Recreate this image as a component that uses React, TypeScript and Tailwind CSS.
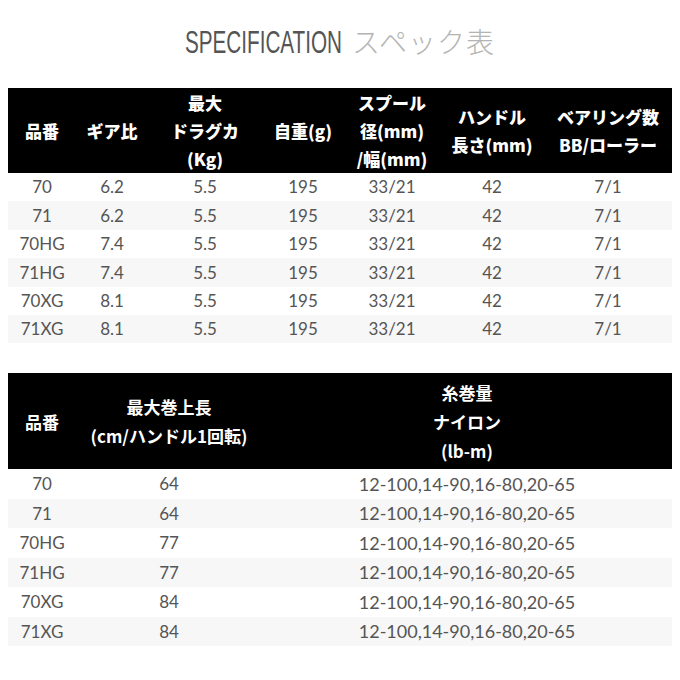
export default function App() {
  const rows1 = [
    ["70", "6.2"],
    ["71", "6.2"],
    ["70HG", "7.4"],
    ["71HG", "7.4"],
    ["70XG", "8.1"],
    ["71XG", "8.1"],
  ];
  const rows2 = [
    ["70", "64"],
    ["71", "64"],
    ["70HG", "77"],
    ["71HG", "77"],
    ["70XG", "84"],
    ["71XG", "84"],
  ];
  const cols1 = "grid grid-cols-[68px_72px_114px_82px_96px_104px_128px]";
  const cols2 = "grid grid-cols-[68px_186px_410px]";
  const jp = "font-['Noto_Sans_CJK_JP',sans-serif]";
  const num = "font-['Lato','Noto_Sans_CJK_JP',sans-serif]";

  return (
    <div className="w-[680px] h-[680px] bg-white">
      <div className="flex justify-center items-baseline pt-[26px] h-[88px]">
        <span className="w-[157px] leading-none text-[32px] text-[#555] whitespace-nowrap font-['Liberation_Sans_Narrow','Liberation_Sans',sans-serif]">
          <span className="inline-block origin-left scale-x-[0.646]">SPECIFICATION</span>
        </span>
        <span className={`ml-[10px] text-[28px] leading-none font-light text-[#b4b4b4] tracking-[1px] ${jp}`}>
          スペック表
        </span>
      </div>

      <div className="mx-[8px]">
        <div className={`${cols1} bg-black text-white font-black text-[17px] leading-[28px] h-[85px] items-center text-center ${jp}`}>
          <div>品番</div>
          <div>ギア比</div>
          <div>最大<br />ドラグカ<br />(Kg)</div>
          <div>自重(g)</div>
          <div>スプール<br />径(mm)<br />/幅(mm)</div>
          <div>ハンドル<br />長さ(mm)</div>
          <div>ベアリング数<br />BB/ローラー</div>
        </div>
        {rows1.map((r, i) => (
          <div
            key={r[0]}
            className={`${cols1} h-[28.4px] items-center text-center text-[17px] text-[#555] ${num} ${i % 2 === 1 ? "bg-[#f7f7f7]" : "bg-white"}`}
          >
            <div>{r[0]}</div>
            <div>{r[1]}</div>
            <div>5.5</div>
            <div>195</div>
            <div>33/21</div>
            <div>42</div>
            <div>7/1</div>
          </div>
        ))}
      </div>

      <div className="mx-[8px] mt-[30px]">
        <div className={`${cols2} bg-black text-white font-bold text-[17px] leading-[29px] h-[96px] items-center text-center ${jp}`}>
          <div>品番</div>
          <div>最大巻上長<br />(cm/ハンドル1回転)</div>
          <div>糸巻量<br />ナイロン<br />(lb-m)</div>
        </div>
        {rows2.map((r, i) => (
          <div
            key={r[0]}
            className={`${cols2} h-[29.5px] items-center text-center text-[17px] text-[#555] ${num} ${i % 2 === 1 ? "bg-[#f7f7f7]" : "bg-white"}`}
          >
            <div>{r[0]}</div>
            <div>{r[1]}</div>
            <div className="text-[18px]">12-100,14-90,16-80,20-65</div>
          </div>
        ))}
      </div>
    </div>
  );
}
